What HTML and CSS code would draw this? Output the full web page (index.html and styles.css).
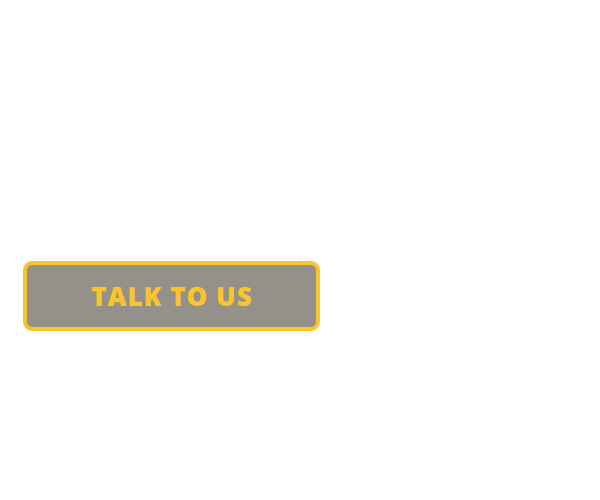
FILE: index.html
```html
<!DOCTYPE html>
<html>
<head>
<meta charset="utf-8">
<link rel="stylesheet" href="styles.css">
</head>
<body>
<main class="page">
  <a class="cta" href="#">TALK TO US</a>
</main>
</body>
</html>
```
FILE: styles.css
```css
html, body {
  margin: 0;
  padding: 0;
  background: #ffffff;
}
.page {
  padding: 261px 0 0 23px;
  display: flex;
  align-items: flex-start;
}
.cta {
  box-sizing: border-box;
  display: flex;
  align-items: center;
  justify-content: center;
  width: 297px;
  height: 70px;
  padding-left: 1px;
  background: #93918a;
  border: 4px solid #fcc42b;
  border-radius: 9px;
  color: #fcc42b;
  font-family: "Open Sans", sans-serif;
  font-weight: 800;
  font-size: 26px;
  letter-spacing: 1px;
  text-decoration: none;
}
```
